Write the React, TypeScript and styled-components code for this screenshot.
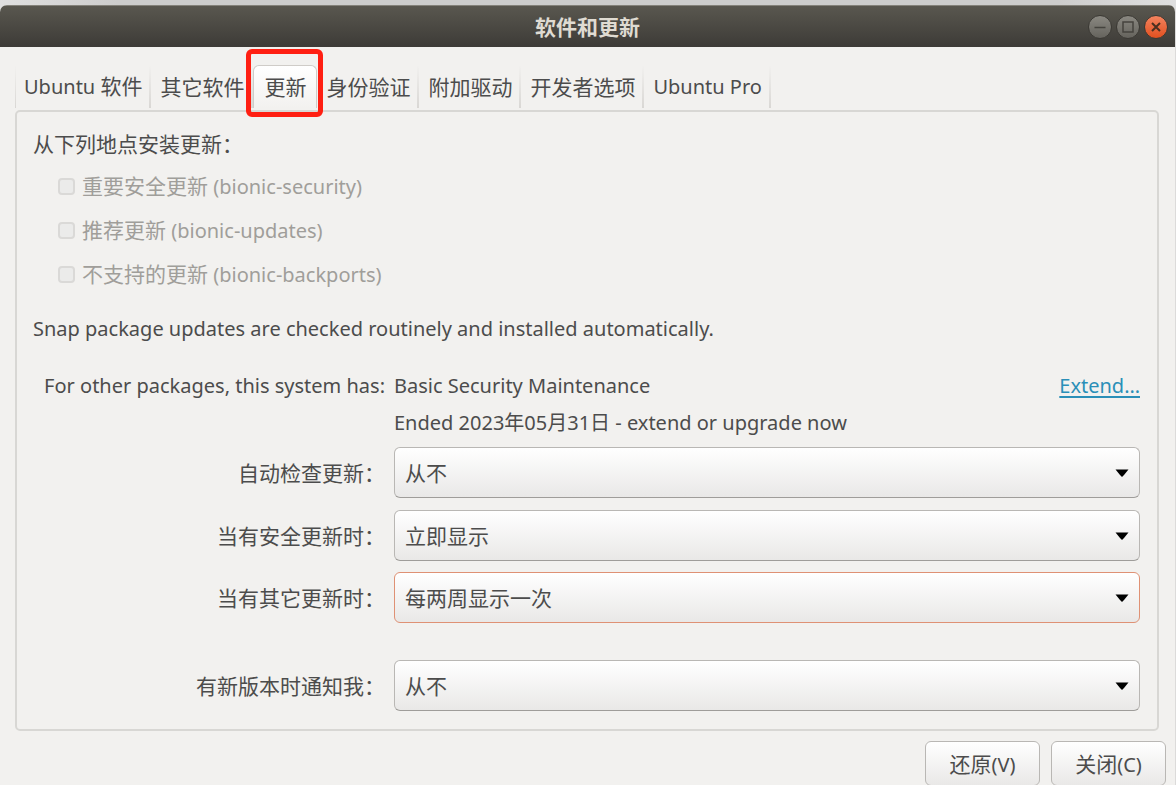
import React from "react";
import styled, { createGlobalStyle } from "styled-components";

const GlobalStyle = createGlobalStyle`
  *, *::before, *::after { box-sizing: border-box; }
  body {
    margin: 0;
    background: #ffffff;
    color: #4c4c4c;
    font-family: "Noto Sans", "Noto Sans CJK SC", sans-serif;
    font-size: 21px;
    line-height: 30px;
  }
  button, select { font: inherit; color: inherit; }
`;

const Desktop = styled.div`
  padding-top: 5px;
  background: linear-gradient(90deg, #e0e0e0, #cdcdcc 10%, #cdcdcc 90%, #e0e0e0);
`;

const Window = styled.main`
  overflow: hidden;
  border-radius: 7px 7px 0 0;
  border-right: 1px solid #dcdbda;
  background: #f2f1ef;
`;

const TitleBar = styled.header`
  display: grid;
  grid-template-columns: 1fr auto 1fr;
  align-items: center;
  height: 42px;
  padding: 0 7px;
  border-top: 1px solid #84827a;
  background: linear-gradient(#59574f, #3d3b37);
`;

const Title = styled.h1`
  grid-column: 2;
  margin: 0;
  color: #dfdbd2;
  font-size: 21px;
  font-weight: 700;
`;

const WindowControls = styled.div`
  display: flex;
  gap: 4px;
  justify-content: flex-end;
`;

const ControlButton = styled.button<{ $close?: boolean }>`
  display: grid;
  place-items: center;
  width: 24px;
  height: 24px;
  padding: 0;
  border: 1px solid #3b3934;
  border-radius: 50%;
  color: ${(p) => (p.$close ? "#4a2f20" : "#45433e")};
  background: ${(p) => (p.$close ? "linear-gradient(#f3835f, #e2501f)" : "linear-gradient(#8a8881, #65635d)")};
`;

const TabBar = styled.nav`
  display: flex;
  align-items: flex-end;
  padding: 18px 16px 2px 15px;
`;

const Tab = styled.button<{ $active?: boolean }>`
  position: relative;
  height: 43px;
  padding: ${(p) => (p.$active ? "0 10px" : "0 9px")};
  white-space: nowrap;
  border: ${(p) => (p.$active ? "1px solid #cfccc8" : "0")};
  border-bottom: 0;
  border-radius: ${(p) => (p.$active ? "6px 6px 0 0" : "0")};
  background: ${(p) =>
    p.$active
      ? "linear-gradient(#ffffff, #f2f1ef)"
      : "linear-gradient(#f2f1ef, #d9d7d4) right / 2px 100% no-repeat"};

  &:first-child {
    background:
      linear-gradient(#f2f1ef, #d9d7d4) left / 1px 100% no-repeat,
      linear-gradient(#f2f1ef, #d9d7d4) right / 2px 100% no-repeat;
  }
`;

const Highlight = styled.span`
  position: absolute;
  inset: -17px -7px -9px -8px;
  border: 5px solid #ff1f12;
  border-radius: 6px;
  pointer-events: none;
`;

const Latin = styled.span`
  font-size: 20px;
`;

const Panel = styled.section`
  margin: 0 16px 0 15px;
  padding: 17px 17px 18px 16px;
  border: 2px solid #d8d7d4;
  border-radius: 5px;
`;

const Sources = styled.fieldset`
  margin: 0 0 18px;
  padding: 0;
  border: 0;
`;

const Legend = styled.legend`
  padding: 0;
  margin-bottom: 5px;
`;

const Source = styled.label`
  display: flex;
  align-items: center;
  gap: 7px;
  height: 44px;
  padding-left: 25px;
  color: #a09e9a;
`;

const Checkbox = styled.input`
  appearance: none;
  width: 17px;
  height: 17px;
  margin: 0;
  border: 2px solid #dad9d7;
  border-radius: 4px;
  background: #ebebea;
`;

const Note = styled.p`
  margin: 0 0 27px;
  font-size: 20px;
`;

const Row = styled.div<{ $gap?: number }>`
  display: grid;
  grid-template-columns: 352px 1fr auto;
  column-gap: 9px;
  align-items: center;
  margin-bottom: ${(p) => p.$gap ?? 0}px;
`;

const PlainLabel = styled.span`
  font-size: 20px;
  text-align: right;
`;

const SelectLabel = styled.label`
  text-align: right;
`;

const Value = styled.span`
  grid-column: 2;
  font-size: 20px;
`;

const ExtendLink = styled.a`
  color: #2a8fb8;
  font-size: 20px;
  text-decoration: underline;
  text-decoration-thickness: 2px;
  text-underline-offset: 3px;
`;

const SelectBox = styled.div`
  position: relative;
  grid-column: 2 / 4;
  display: flex;
`;

const Select = styled.select<{ $focused?: boolean }>`
  appearance: none;
  width: 100%;
  height: 51px;
  padding: 0 40px 0 10px;
  border: 1px solid ${(p) => (p.$focused ? "#df9174" : "#b9b7b4")};
  border-bottom-color: ${(p) => (p.$focused ? "#df9174" : "#9f9d9a")};
  border-radius: 6px;
  outline: 0;
  background: linear-gradient(#ffffff, #e9e8e7);
`;

const Arrow = styled.svg`
  position: absolute;
  top: 22px;
  right: 11px;
  pointer-events: none;
`;

const Footer = styled.footer`
  display: flex;
  justify-content: flex-end;
  gap: 11px;
  height: 54px;
  padding: 10px 9px 0;
  overflow: hidden;
`;

const ActionButton = styled.button`
  width: 115px;
  height: 45px;
  padding: 2px 0 0;
  border: 1px solid #b9b7b4;
  border-radius: 6px;
  background: linear-gradient(#ffffff, #e9e8e7);
`;

type SelectRowProps = { id: string; label: string; value: string; gap?: number; focused?: boolean };

function SelectRow({ id, label, value, gap, focused }: SelectRowProps) {
  return (
    <Row $gap={gap}>
      <SelectLabel htmlFor={id}>{label}</SelectLabel>
      <SelectBox>
        <Select id={id} $focused={focused}>
          <option>{value}</option>
        </Select>
        <Arrow width="14" height="9" viewBox="0 0 14 9" aria-hidden="true">
          <path d="M0.500 0.500h13L9 6 7 8 5 6z" fill="#000" />
        </Arrow>
      </SelectBox>
    </Row>
  );
}

const sources = [
  ["重要安全更新", "(bionic-security)"],
  ["推荐更新", "(bionic-updates)"],
  ["不支持的更新", "(bionic-backports)"],
];

export default function App() {
  return (
    <>
      <GlobalStyle />
      <Desktop>
        <Window>
          <TitleBar>
            <Title>软件和更新</Title>
            <WindowControls>
              <ControlButton aria-label="最小化">
                <svg width="14" height="14" viewBox="0 0 14 14">
                  <path d="M1.500 7.500h11" stroke="currentColor" strokeWidth="1.500" />
                </svg>
              </ControlButton>
              <ControlButton aria-label="最大化">
                <svg width="14" height="14" viewBox="0 0 14 14">
                  <rect x="2" y="2" width="10" height="10" fill="none" stroke="currentColor" strokeWidth="1.500" />
                </svg>
              </ControlButton>
              <ControlButton aria-label="关闭窗口" $close>
                <svg width="14" height="14" viewBox="0 0 14 14">
                  <path d="M3 3l8 8M11 3l-8 8" stroke="currentColor" strokeWidth="2" />
                </svg>
              </ControlButton>
            </WindowControls>
          </TitleBar>

          <TabBar>
            <Tab><Latin>Ubuntu </Latin>软件</Tab>
            <Tab>其它软件</Tab>
            <Tab $active>更新<Highlight /></Tab>
            <Tab>身份验证</Tab>
            <Tab>附加驱动</Tab>
            <Tab>开发者选项</Tab>
            <Tab><Latin>Ubuntu Pro</Latin></Tab>
          </TabBar>

          <Panel>
            <Sources>
              <Legend>从下列地点安装更新：</Legend>
              {sources.map(([name, pocket]) => (
                <Source key={pocket}>
                  <Checkbox type="checkbox" disabled />
                  <span>{name}<Latin> {pocket}</Latin></span>
                </Source>
              ))}
            </Sources>
            <Note>Snap package updates are checked routinely and installed automatically.</Note>
            <Row $gap={7}>
              <PlainLabel>For other packages, this system has:</PlainLabel>
              <Value>Basic Security Maintenance</Value>
              <ExtendLink href="#extend">Extend…</ExtendLink>
            </Row>
            <Row $gap={9}>
              <Value>Ended 2023年05月31日 - extend or upgrade now</Value>
            </Row>
            <SelectRow id="check" label="自动检查更新：" value="从不" gap={12} />
            <SelectRow id="security" label="当有安全更新时：" value="立即显示" gap={11} />
            <SelectRow id="other" label="当有其它更新时：" value="每两周显示一次" gap={37} focused />
            <SelectRow id="release" label="有新版本时通知我：" value="从不" />
          </Panel>

          <Footer>
            <ActionButton>还原<Latin>(V)</Latin></ActionButton>
            <ActionButton>关闭<Latin>(C)</Latin></ActionButton>
          </Footer>
        </Window>
      </Desktop>
    </>
  );
}
